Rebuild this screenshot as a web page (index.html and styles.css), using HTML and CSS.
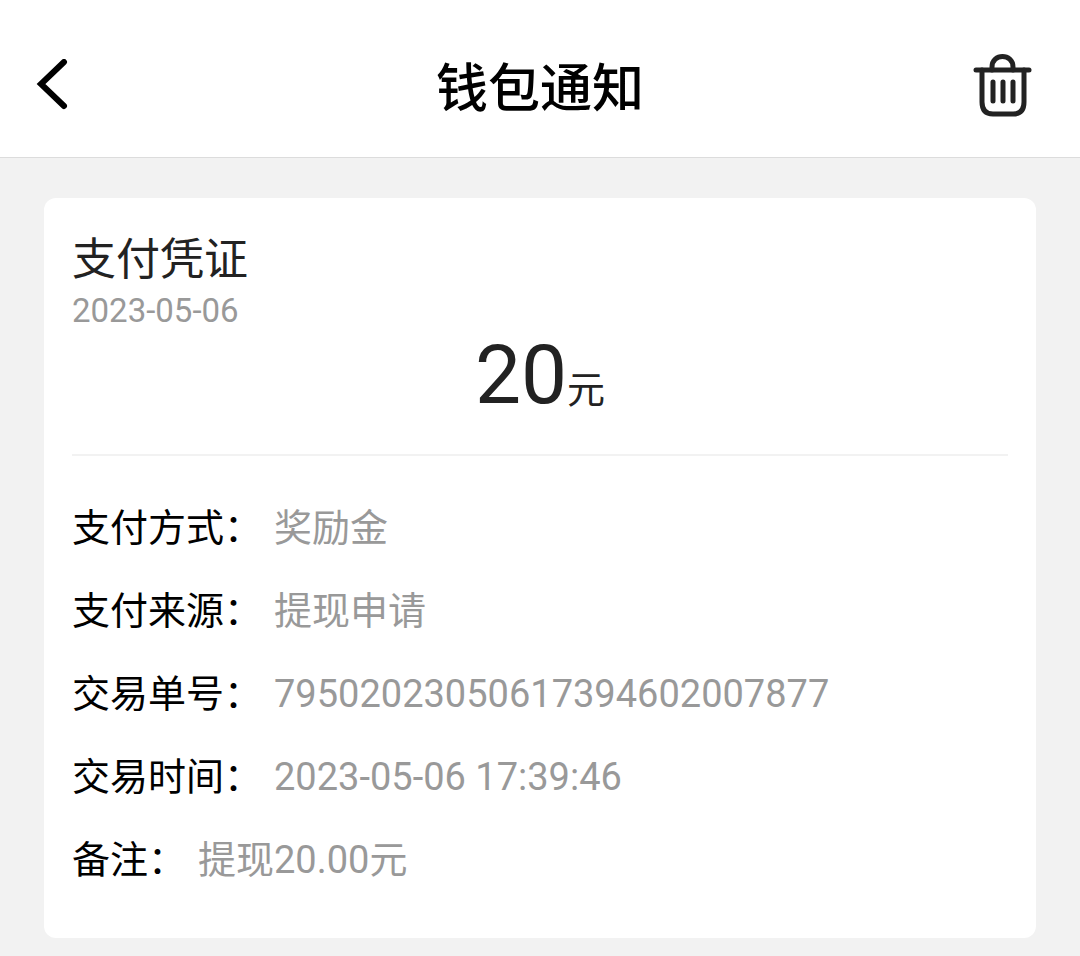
FILE: index.html
```html
<!DOCTYPE html>
<html lang="zh-CN">
<head>
    <meta charset="UTF-8">
    <meta name="viewport" content="width=device-width, initial-scale=1.0">
    <title>钱包通知</title>
    <link rel="stylesheet" href="styles.css">
</head>
<body>
    <header class="navbar">
        <button class="icon-btn" type="button" aria-label="返回">
            <svg class="icon-back" viewBox="0 0 32 52">
                <path d="M28 3 L5 25 L28 47" fill="none" stroke="#000" stroke-width="6" stroke-linecap="round"/>
            </svg>
        </button>
        <h1 class="title">钱包通知</h1>
        <button class="icon-btn icon-btn-right" type="button" aria-label="删除">
            <svg class="icon-trash" viewBox="0 0 60 66" fill="none" stroke="#222" stroke-width="5" stroke-linecap="round">
                <path d="M4 18 H57"/>
                <path d="M20 18 V15 C20 1 41 1 41 15 V18"/>
                <path d="M10 18 V50 Q10 62 21 62 H41 Q52 62 52 50 V18"/>
                <path d="M21 30 V49 M31 30 V49 M41 30 V49"/>
            </svg>
        </button>
    </header>

    <main class="content">
        <section class="card">
            <h2 class="card-title">支付凭证</h2>
            <p class="card-date">2023-05-06</p>
            <p class="amount">20<span class="unit">元</span></p>
            <dl class="details">
                <div class="row"><dt>支付方式：</dt><dd>奖励金</dd></div>
                <div class="row"><dt>支付来源：</dt><dd>提现申请</dd></div>
                <div class="row"><dt>交易单号：</dt><dd>79502023050617394602007877</dd></div>
                <div class="row"><dt>交易时间：</dt><dd>2023-05-06 17:39:46</dd></div>
                <div class="row"><dt>备注：</dt><dd>提现20.00元</dd></div>
            </dl>
        </section>
    </main>
</body>
</html>
```
FILE: styles.css
```css
* {
    box-sizing: border-box;
    margin: 0;
    padding: 0;
}

body {
    font-family: Roboto, "Noto Sans CJK SC", sans-serif;
    background-color: #f2f2f2;
    color: #000;
    min-height: 100vh;
}

.navbar {
    display: grid;
    grid-template-columns: 96px 1fr 96px;
    align-items: center;
    padding: 52px 0 39px;
    background-color: #fff;
    border-bottom: 1px solid #dcdcdc;
}

.title {
    padding-top: 10px;
    font-size: 52px;
    line-height: 56px;
    font-weight: 500;
    text-align: center;
}

.icon-btn {
    display: flex;
    padding-left: 36px;
    border: none;
    background: none;
    cursor: pointer;
}

.icon-btn-right {
    justify-content: flex-end;
    padding: 0 48px 0 0;
}

.icon-back {
    width: 32px;
    height: 52px;
}

.icon-trash {
    flex-shrink: 0;
    width: 60px;
    height: 66px;
}

.content {
    padding: 40px 44px 18px;
}

.card {
    padding: 31px 28px 36px;
    background-color: #fff;
    border-radius: 12px;
}

.card-title {
    font-size: 44px;
    line-height: 62px;
    font-weight: 400;
    color: #222;
}

.card-date {
    font-size: 33px;
    line-height: 40px;
    color: #999;
}

.amount {
    padding-bottom: 35px;
    border-bottom: 2px solid #f2f2f2;
    font-size: 82px;
    line-height: 88px;
    color: #222;
    text-align: center;
}

.unit {
    font-size: 38px;
    line-height: 44px;
}

.details {
    padding-top: 31px;
    font-size: 38px;
}

.row {
    display: flex;
    gap: 12px;
    padding: 14px 0;
    line-height: 55px;
}

.row dt {
    flex-shrink: 0;
}

.row dd {
    min-width: 0;
    overflow-wrap: anywhere;
    color: #999;
}
```
